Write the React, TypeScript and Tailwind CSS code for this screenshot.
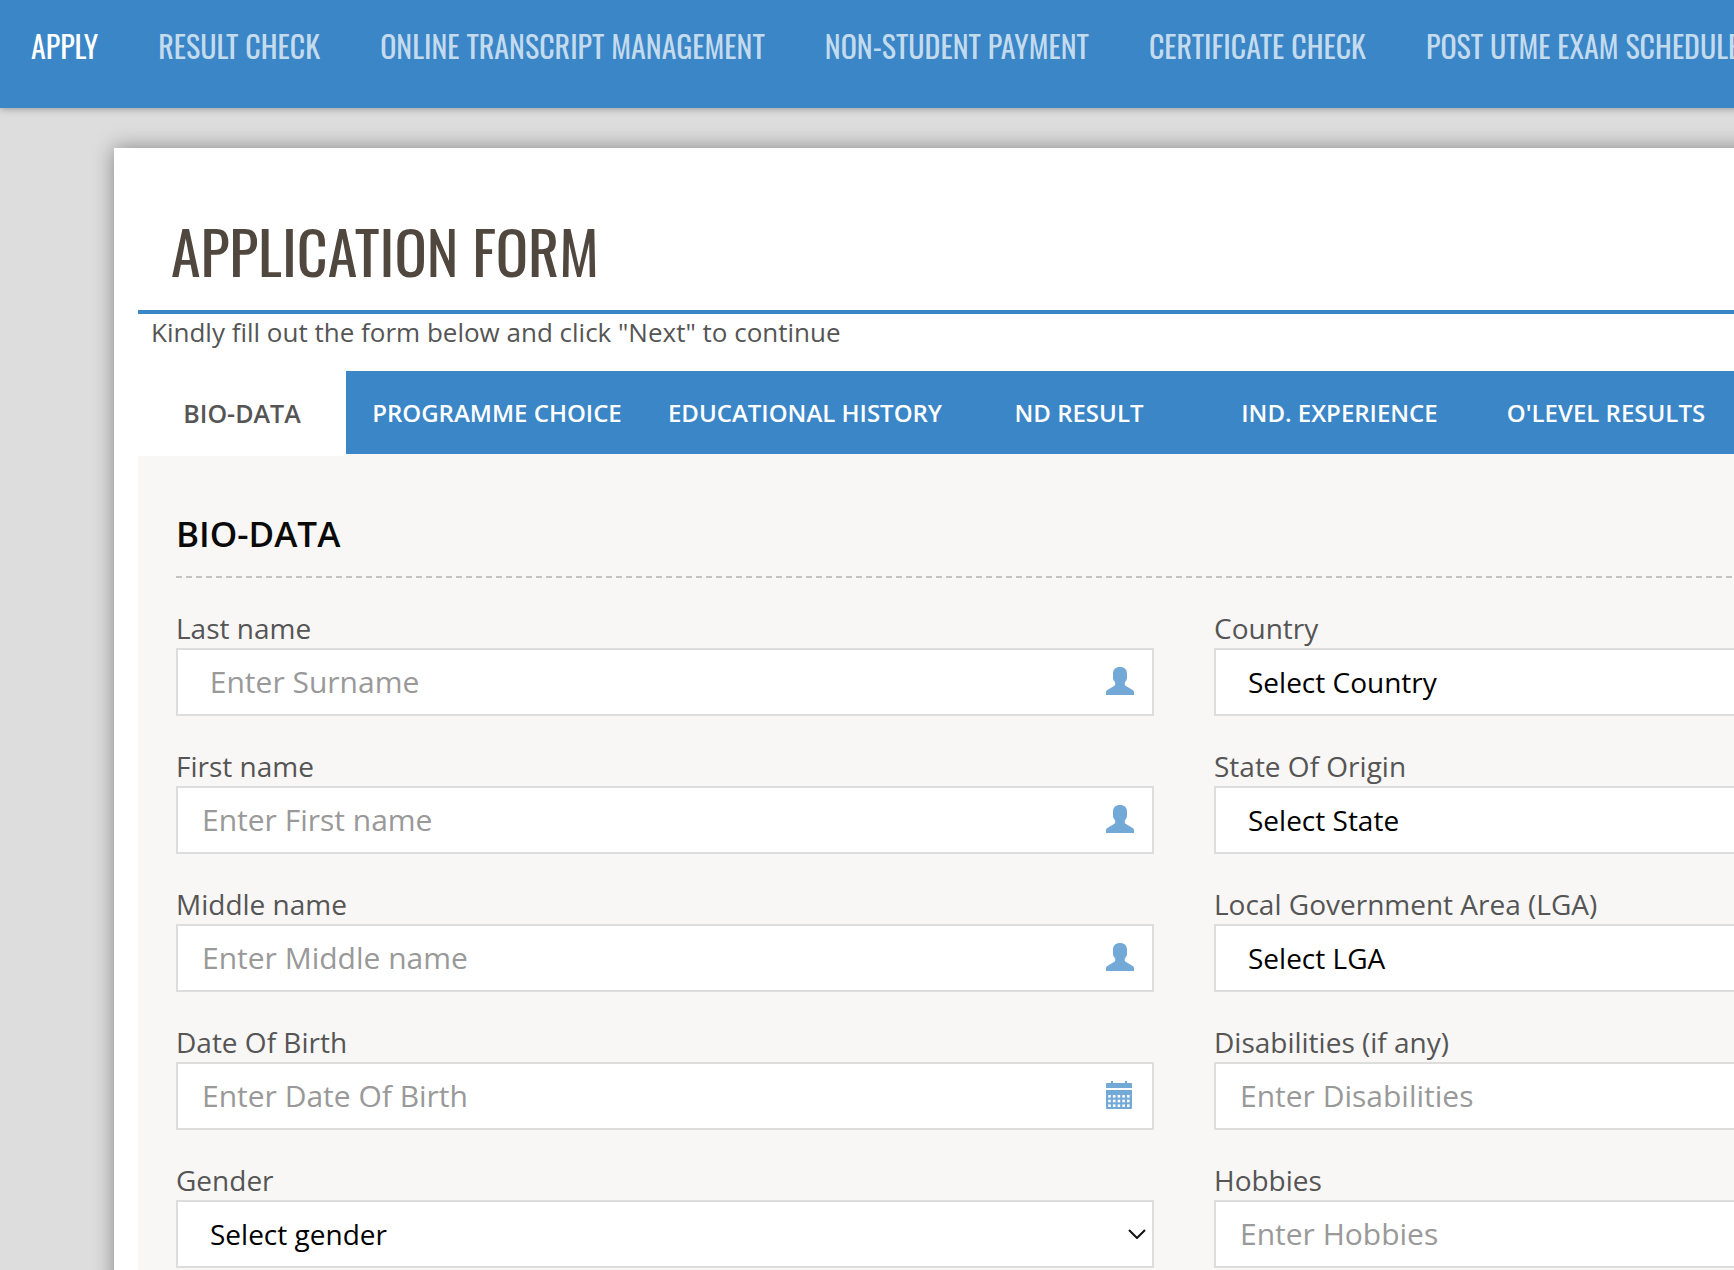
import { useId } from "react";
import type { ReactNode } from "react";

const navLinks = [
    "APPLY",
    "RESULT CHECK",
    "ONLINE TRANSCRIPT MANAGEMENT",
    "NON-STUDENT PAYMENT",
    "CERTIFICATE CHECK",
    "POST UTME EXAM SCHEDULE",
];

const tabs = [
    { label: "PROGRAMME CHOICE", width: "w-[302px]" },
    { label: "EDUCATIONAL HISTORY", width: "w-[314px]" },
    { label: "ND RESULT", width: "w-[234px]" },
    { label: "IND. EXPERIENCE", width: "w-[287px]" },
    { label: "O'LEVEL RESULTS", width: "w-[246px]" },
];

function UserIcon() {
    return (
        <svg className="w-7 h-7" viewBox="0 0 28 28" fill="#72a9d7" aria-hidden="true">
            <path d="M14 0c4.400 0 7 2.600 7 6.600v4.200c0 1.800-.8 3.200-2.200 4.600v1.800c0 .9.400 1.400 1.200 1.800l6.600 3.900c1 .6 1.400 1.300 1.400 2.300V28H0v-2.800c0-1 .4-1.700 1.400-2.300L8 19c.8-.4 1.200-.9 1.200-1.800v-1.800C7.800 14 7 12.600 7 10.800V6.600C7 2.600 9.600 0 14 0z" />
        </svg>
    );
}

function CalendarIcon() {
    return (
        <svg className="w-7 h-7" viewBox="0 0 28 28" aria-hidden="true">
            <path fill="#72a9d7" d="M5 0h2v2h12V0h2v2h4q1 0 1 1v4H0V3q0-1 1-1h4zM0 9h26v18q0 1-1 1H1q-1 0-1-1z" />
            <g fill="#fff">
                {[14, 18.700, 23.400].map((y) =>
                    [2.200, 6.900, 11.600, 16.300, 21].map((x) => <rect key={`${x}-${y}`} x={x} y={y} width="2.600" height="2.600" />)
                )}
            </g>
        </svg>
    );
}

function TextField({ label, placeholder, icon }: { label: string; placeholder: string; icon?: ReactNode }) {
    const id = useId();

    return (
        <div>
            <label htmlFor={id} className="block text-[28px] leading-10">{label}</label>
            <div className="flex items-center h-[68px] bg-white border-2 border-[#ddd] pr-[18px] pb-0.5">
                <input
                    id={id}
                    type="text"
                    placeholder={placeholder}
                    className="flex-1 min-w-0 h-full pl-6 text-[30px] text-black placeholder:text-[#999] outline-none"
                />
                {icon}
            </div>
        </div>
    );
}

function SelectField({ label, option }: { label: string; option: string }) {
    const id = useId();

    return (
        <div>
            <label htmlFor={id} className="block text-[28px] leading-10">{label}</label>
            <div className="grid items-center h-[68px] bg-white border-2 border-[#ddd]">
                <select id={id} className="col-start-1 row-start-1 w-full h-16 pl-8 text-[28px] text-black appearance-none outline-none">
                    <option>{option}</option>
                </select>
                <svg
                    className="col-start-1 row-start-1 justify-self-end mr-1.5 w-[18px] h-[10px] pointer-events-none"
                    viewBox="0 0 18 10"
                    fill="none"
                    stroke="#111"
                    strokeWidth="2"
                    aria-hidden="true"
                >
                    <path d="M1 1l8 8 8-8" />
                </svg>
            </div>
        </div>
    );
}

export default function App() {
    return (
        <div className="min-h-screen overflow-hidden bg-[#ddd] text-[#555] font-['Open_Sans','Noto_Sans',sans-serif]">
            <div className="min-w-[2368px] min-h-screen flex flex-col">
                <nav className="flex gap-[60px] h-[108px] pl-[31px] pt-6 bg-[#3b86c7] shadow-[0_0_8px_rgba(0,0,0,0.4)] text-[30px] leading-[44px] font-['Oswald','Open_Sans',sans-serif]">
                    {navLinks.map((link, i) => (
                        <a key={link} href="#" className={i === 0 ? "text-white" : "text-[#c4dbee] hover:text-white"}>
                            {link}
                        </a>
                    ))}
                </nav>

                <main className="flex-1 mt-10 mx-[114px] px-6 bg-white shadow-[0_0_20px_rgba(0,0,0,0.4)]">
                    <h1 className="h-[166px] pt-[67px] pl-[33px] border-b-4 border-[#3b86c7] text-[#50483f] text-[60px] leading-[70px] font-['Oswald','Open_Sans',sans-serif]">
                        APPLICATION FORM
                    </h1>
                    <p className="h-[57px] pl-[13px] text-[26px] leading-9">
                        Kindly fill out the form below and click "Next" to continue
                    </p>

                    <div className="flex h-[85px] bg-[#f8f7f5] font-semibold">
                        <button type="button" className="w-[208px] bg-white text-[25px]">BIO-DATA</button>
                        <div className="flex flex-1 h-[83px] bg-[#3b86c7] text-white text-[24px]">
                            {tabs.map((tab) => (
                                <button key={tab.label} type="button" className={tab.width}>{tab.label}</button>
                            ))}
                        </div>
                    </div>

                    <form className="px-[38px] pb-[30px] bg-[#f8f7f5]">
                        <h2 className="h-[122px] pt-[50px] border-b-2 border-dashed border-[#c4c4c2] text-[35px] leading-[56px] font-semibold text-[#0a0a0a]">
                            BIO-DATA
                        </h2>
                        <div className="grid grid-cols-2 gap-x-[60px] gap-y-[30px] pt-[30px]">
                            <TextField label="Last name" placeholder=" Enter Surname" icon={<UserIcon />} />
                            <SelectField label="Country" option="Select Country" />
                            <TextField label="First name" placeholder="Enter First name" icon={<UserIcon />} />
                            <SelectField label="State Of Origin" option="Select State" />
                            <TextField label="Middle name" placeholder="Enter Middle name" icon={<UserIcon />} />
                            <SelectField label="Local Government Area (LGA)" option="Select LGA" />
                            <TextField label="Date Of Birth" placeholder="Enter Date Of Birth" icon={<CalendarIcon />} />
                            <TextField label="Disabilities (if any)" placeholder="Enter Disabilities" />
                            <SelectField label="Gender" option="Select gender" />
                            <TextField label="Hobbies" placeholder="Enter Hobbies" />
                        </div>
                    </form>
                </main>
            </div>
        </div>
    );
}
